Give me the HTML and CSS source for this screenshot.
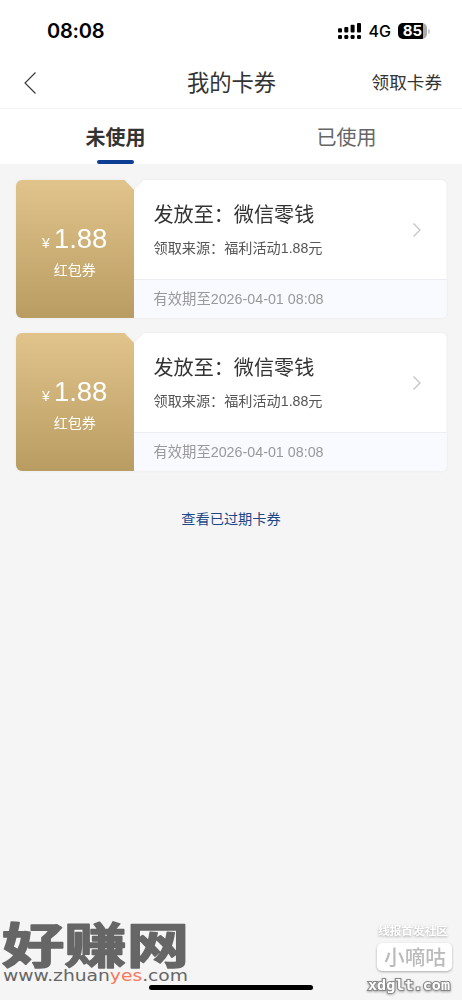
FILE: index.html
```html
<!DOCTYPE html>
<html lang="zh-CN">
<head>
<meta charset="utf-8">
<title>我的卡券</title>
<link rel="stylesheet" href="styles.css">
</head>
<body>
<div class="screen">
  <div class="status">
    <span class="time">08:08</span>
    <div class="status-right">
      <svg class="signal" width="24" height="16" viewBox="0 0 24 16">
        <g fill="#000"><rect x="0" y="5.2" width="4" height="4.4" rx="1"/><rect x="6.3" y="4" width="4" height="5.6" rx="1"/><rect x="12.6" y="1.8" width="4" height="7.8" rx="1"/><rect x="19" y="0" width="4" height="9.6" rx="1"/>
        <rect x="0" y="12" width="4" height="4" rx="1.3"/><rect x="6.3" y="12" width="4" height="4" rx="1.3"/><rect x="12.6" y="12" width="4" height="4" rx="1.3"/><rect x="19" y="12" width="4" height="4" rx="1.3"/></g>
      </svg>
      <span class="net">4G</span>
      <span class="battery">85</span><i class="battery-cap"></i>
    </div>
  </div>
  <header class="nav">
    <svg class="back" width="14" height="24" viewBox="0 0 14 24"><path d="M12.500 1.500 2 12l10.500 10.500" fill="none" stroke="#333" stroke-width="1.100"/></svg>
    <h1>我的卡券</h1>
    <span class="claim">领取卡券</span>
  </header>
  <nav class="tabs">
    <span class="tab active">未使用</span>
    <span class="tab">已使用</span>
  </nav>
  <main>
    <section class="card">
      <div class="amount"><p class="price"><small>¥</small>1.88</p><p class="kind">红包券</p></div>
      <div class="info">
        <div class="detail">
          <div><h2>发放至：微信零钱</h2><p>领取来源：福利活动1.88元</p></div>
          <svg width="10" height="16" viewBox="0 0 10 16"><path d="M1.500 1.500 8 8l-6.500 6.500" fill="none" stroke="#c4c4c4" stroke-width="1.300"/></svg>
        </div>
        <div class="expiry">有效期至2026-04-01 08:08</div>
      </div>
    </section>
    <section class="card">
      <div class="amount"><p class="price"><small>¥</small>1.88</p><p class="kind">红包券</p></div>
      <div class="info">
        <div class="detail">
          <div><h2>发放至：微信零钱</h2><p>领取来源：福利活动1.88元</p></div>
          <svg width="10" height="16" viewBox="0 0 10 16"><path d="M1.500 1.500 8 8l-6.500 6.500" fill="none" stroke="#c4c4c4" stroke-width="1.300"/></svg>
        </div>
        <div class="expiry">有效期至2026-04-01 08:08</div>
      </div>
    </section>
    <a class="expired">查看已过期卡券</a>
  </main>
  <svg class="mark-left" width="200" height="100" viewBox="0 0 200 100">
    <text class="mark-name" x="2" y="63" textLength="187" lengthAdjust="spacingAndGlyphs">好赚网</text>
    <text class="mark-url" x="3" y="81" textLength="185" lengthAdjust="spacingAndGlyphs">www.zhuan<tspan class="hot">yes</tspan>.com</text>
  </svg>
  <svg class="mark-right" width="102" height="80" viewBox="0 0 102 80">
    <text class="slogan" x="18" y="15" textLength="70" lengthAdjust="spacingAndGlyphs">线报首发社区</text>
    <rect class="plate" x="17" y="23" width="75" height="28" rx="5"/>
    <text class="plate-text" x="24" y="45" textLength="62" lengthAdjust="spacingAndGlyphs">小嘀咕</text>
    <text class="site" x="8" y="70" textLength="82" lengthAdjust="spacingAndGlyphs">xdglt.com</text>
  </svg>
  <div class="home-bar"></div>
</div>
</body>
</html>
```
FILE: styles.css
```css
* { box-sizing: border-box; margin: 0; padding: 0; }
body { background: #f4f4f4; font-family: "Liberation Sans", "Noto Sans CJK SC", sans-serif; color: #333; }
.screen { position: relative; width: 462px; height: 1000px; overflow: hidden; background: #f5f5f5; }
.status { height: 58px; background: #fff; display: flex; justify-content: space-between; align-items: center; padding: 4px 32px 0 47px; }
.time { font: 600 20px/24px Inter, sans-serif; color: #000; letter-spacing: -.2px; }
.status-right { display: flex; align-items: center; }
.net { font: 500 16px/20px Inter, sans-serif; color: #000; margin: 0 7px 0 7px; }
.battery { width: 29px; height: 16px; border-radius: 5px; background: linear-gradient(90deg, #000 25px, #aaa 25px); color: #fff; font: 700 15px/16px Inter, sans-serif; text-align: center; }
.battery-cap { width: 2px; height: 5px; margin-left: 1px; border-radius: 0 2px 2px 0; background: #ccc; }
.nav { height: 51px; background: #fff; border-bottom: 1px solid #f3f3f3; display: grid; grid-template-columns: 1fr auto 1fr; align-items: center; padding: 0 20px 0 23px; }
.nav h1 { font-size: 22.300px; font-weight: 400; line-height: 30px; padding: 1px 2px 0 0; }
.claim { font-size: 17.600px; line-height: 24px; justify-self: end; }
.tabs { height: 55px; background: #fff; display: grid; grid-template-columns: 1fr 1fr; }
.tab { position: relative; text-align: center; font-size: 20px; line-height: 55px; padding-top: 2px; height: 55px; color: #666; }
.tab.active { color: #333; font-weight: 700; }
.tab.active::after { content: ""; position: absolute; left: 97px; bottom: 0; width: 37px; height: 4px; border-radius: 2px; background: #0c3f93; }
main { display: flex; flex-direction: column; align-items: center; gap: 15px; padding-top: 16px; }
.card { width: 431px; height: 138px; display: flex; border-radius: 6px; overflow: hidden; filter: drop-shadow(0 0 1px #e9e9eb); }
.amount { width: 118.500px; background: linear-gradient(#e1c48b, #b99c62); color: #fff; text-align: center; padding-top: 43px; clip-path: polygon(0 0, 109px 0, 100% 10px, 100% 100%, 0 100%); }
.price { font-size: 27.500px; line-height: 31px; }
.price small { font-size: 14px; margin-right: 4px; }
.kind { font-size: 14px; line-height: 20px; margin-top: 1px; }
.info { flex: 1; display: flex; flex-direction: column; background: #fff; clip-path: polygon(10px 0, 100% 0, 100% 100%, 0 100%, 0 10px); }
.detail { flex: none; height: 99px; display: flex; justify-content: space-between; align-items: center; padding: 0 25px 0 19.500px; }
.detail h2 { font-size: 20.100px; line-height: 30px; font-weight: 400; margin-top: -2px; }
.detail p { font-size: 14.150px; line-height: 20px; margin-top: 8px; color: #555; }
.expiry { flex: 1; padding-left: 19.500px; background: #f9faff; border-top: 1px solid #ececf2; font-size: 14.300px; line-height: 38px; color: #999; }
.expired { margin-top: 23px; font-size: 14.200px; line-height: 20px; color: #1c4788; }
.mark-left { position: absolute; left: 0; top: 900px; }
.mark-name { font: 700 48px "Noto Sans CJK SC", sans-serif; fill: #666; stroke: #666; stroke-width: 1.500px; stroke-linejoin: round; }
.mark-url { font: 15px "DejaVu Sans", sans-serif; fill: #666; }
.hot { fill: #fa7958; }
.mark-right { position: absolute; left: 360px; top: 920px; filter: drop-shadow(0 1px 1px #aaa); }
.slogan { font: 700 11px "Noto Sans CJK SC", sans-serif; fill: #fff; }
.plate { fill: #fff; }
.plate-text { font: 500 20px "Noto Sans CJK SC", sans-serif; fill: #bbb; }
.site { font: 700 14px "DejaVu Sans Mono", monospace; fill: #fff; stroke: #888; stroke-width: 2px; paint-order: stroke; }
.home-bar { position: absolute; left: 149px; top: 985px; width: 164px; height: 5px; border-radius: 3px; background: #000; }
```
